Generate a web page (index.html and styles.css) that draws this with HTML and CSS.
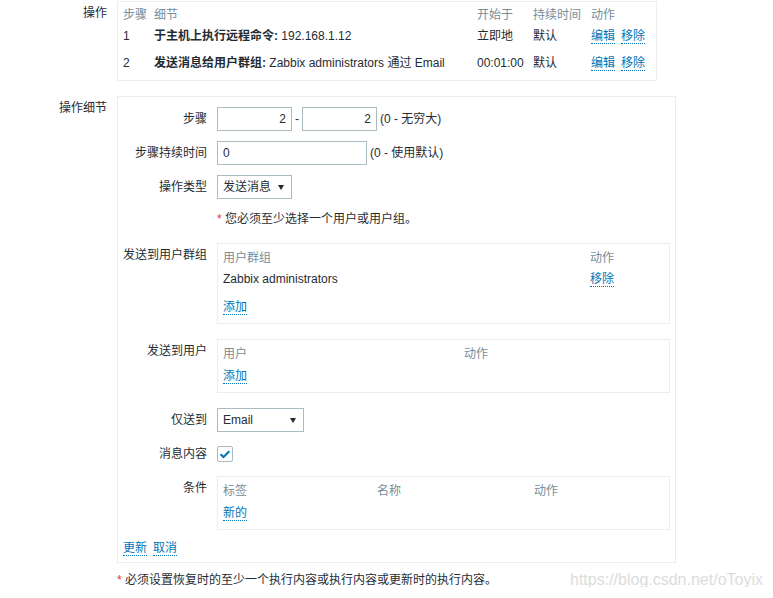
FILE: index.html
```html
<!DOCTYPE html>
<html lang="zh-CN">
<head>
<meta charset="utf-8">
<title>操作</title>
<link rel="stylesheet" href="styles.css">
</head>
<body>
<div class="form-grid">
  <div class="section-label">操作</div>
  <div class="ops-box">
    <table class="ops-table">
      <colgroup><col class="c-step"><col class="c-detail"><col class="c-start"><col class="c-dur"><col></colgroup>
      <thead>
        <tr><th>步骤</th><th>细节</th><th>开始于</th><th>持续时间</th><th>动作</th></tr>
      </thead>
      <tbody>
        <tr>
          <td>1</td>
          <td><b>于主机上执行远程命令:</b> 192.168.1.12</td>
          <td>立即地</td>
          <td>默认</td>
          <td><a class="link" href="#">编辑</a><a class="link" href="#">移除</a></td>
        </tr>
        <tr>
          <td>2</td>
          <td><b>发送消息给用户群组:</b> Zabbix administrators 通过 Email</td>
          <td>00:01:00</td>
          <td>默认</td>
          <td><a class="link" href="#">编辑</a><a class="link" href="#">移除</a></td>
        </tr>
      </tbody>
    </table>
  </div>

  <div class="section-label">操作细节</div>
  <div class="details-box">
    <ul class="form-list">
      <li class="form-row">
        <label class="row-label">步骤</label>
        <div class="field-inline">
          <input class="input input-step" type="text" value="2">
          <span>-</span>
          <input class="input input-step" type="text" value="2">
          <span>(0 - 无穷大)</span>
        </div>
      </li>
      <li class="form-row">
        <label class="row-label">步骤持续时间</label>
        <div class="field-inline">
          <input class="input input-dur" type="text" value="0">
          <span>(0 - 使用默认)</span>
        </div>
      </li>
      <li class="form-row">
        <label class="row-label">操作类型</label>
        <div class="field-inline">
          <div class="select select-type"><span>发送消息</span><span class="arrow"></span></div>
        </div>
      </li>
      <li class="form-row">
        <span class="row-label"></span>
        <div class="note"><span class="asterisk">*</span> 您必须至少选择一个用户或用户组。</div>
      </li>
      <li class="form-row">
        <label class="row-label row-label-top">发送到用户群组</label>
        <div class="subtable">
          <table class="sub">
            <colgroup><col class="c-group"><col></colgroup>
            <tr class="th-row"><td>用户群组</td><td>动作</td></tr>
            <tr class="data-row"><td>Zabbix administrators</td><td><a class="link" href="#">移除</a></td></tr>
            <tr class="add-row"><td colspan="2"><a class="link" href="#">添加</a></td></tr>
          </table>
        </div>
      </li>
      <li class="form-row">
        <label class="row-label row-label-top">发送到用户</label>
        <div class="subtable">
          <table class="sub">
            <colgroup><col class="c-user"><col></colgroup>
            <tr class="th-row"><td>用户</td><td>动作</td></tr>
            <tr class="add-row"><td colspan="2"><a class="link" href="#">添加</a></td></tr>
          </table>
        </div>
      </li>
      <li class="form-row">
        <label class="row-label">仅送到</label>
        <div class="field-inline">
          <div class="select select-media"><span>Email</span><span class="arrow"></span></div>
        </div>
      </li>
      <li class="form-row">
        <label class="row-label">消息内容</label>
        <div class="field-inline">
          <span class="checkbox">
            <svg width="16" height="16" viewBox="0 0 16 16"><path d="M3.5 8.2 L6.5 11 L12.3 5.2" fill="none" stroke="#0275b8" stroke-width="2"/></svg>
          </span>
        </div>
      </li>
      <li class="form-row">
        <label class="row-label row-label-top">条件</label>
        <div class="subtable">
          <table class="sub">
            <colgroup><col class="c-tag"><col class="c-name"><col></colgroup>
            <tr class="th-row"><td>标签</td><td>名称</td><td>动作</td></tr>
            <tr class="add-row"><td colspan="3"><a class="link" href="#">新的</a></td></tr>
          </table>
        </div>
      </li>
    </ul>
    <div class="form-actions"><a class="link" href="#">更新</a><a class="link" href="#">取消</a></div>
  </div>

  <div class="footer">
    <span><span class="asterisk">*</span> 必须设置恢复时的至少一个执行内容或执行内容或更新时的执行内容。</span>
    <span class="watermark">https://blog.csdn.net/oToyix</span>
  </div>
</div>
</body>
</html>
```

FILE: styles.css
```css
html, body {
  background: #fff;
}
body {
  margin: 0;
  padding-top: 1px;
  font-family: "Liberation Sans", Arial, "Noto Sans CJK SC", sans-serif;
  font-size: 12px;
  line-height: 14px;
  color: #1f2c33;
}

.form-grid {
  display: grid;
  grid-template-columns: 107px 1fr;
  column-gap: 10px;
  align-items: start;
}

.section-label {
  text-align: right;
  padding-top: 5px;
  line-height: 14px;
}

/* operations box */
.ops-box {
  width: 540px;
  box-sizing: border-box;
  border: 1px solid #ebeef0;
  padding: 6px 5px 4px;
  margin-bottom: 15px;
}
.ops-table {
  width: 100%;
  table-layout: fixed;
  border-collapse: collapse;
}
.ops-table th {
  padding: 0;
  text-align: left;
  font-weight: normal;
  color: #768d99;
  white-space: nowrap;
}
.ops-table td {
  padding: 7px 0 6px;
  white-space: nowrap;
}
.ops-table b {
  font-weight: bold;
}
.c-step { width: 31px; }
.c-detail { width: 323px; }
.c-start { width: 56px; }
.c-dur { width: 58px; }

.link {
  color: #0275b8;
  text-decoration: none;
  border-bottom: 1px dotted #0275b8;
  margin-right: 6px;
}

/* details box */
.details-box {
  width: 559px;
  box-sizing: border-box;
  border: 1px solid #ebeef0;
  padding: 10px 5px 7px;
}
.form-list {
  list-style: none;
  margin: 0;
  padding: 0;
  display: flex;
  flex-direction: column;
  gap: 10px;
}
.form-row {
  display: flex;
  gap: 10px;
  min-height: 24px;
}
.row-label {
  flex: none;
  width: 84px;
  text-align: right;
  line-height: 24px;
  white-space: nowrap;
}
.row-label-top {
  line-height: 14px;
  padding-top: 5px;
}
.field-inline {
  display: flex;
  align-items: center;
  gap: 3px;
  height: 24px;
  white-space: nowrap;
}
.input {
  height: 24px;
  box-sizing: border-box;
  border: 1px solid #acbbc2;
  border-radius: 0;
  padding: 0 5px;
  margin: 0;
  font: inherit;
  color: #1f2c33;
  background: #fff;
  outline: none;
}
.input-step {
  width: 75px;
  text-align: right;
}
.input-dur {
  width: 150px;
}
.select {
  display: flex;
  align-items: center;
  justify-content: space-between;
  height: 24px;
  box-sizing: border-box;
  border: 1px solid #acbbc2;
  padding: 0 7px 0 5px;
  background: #fff;
}
.select-type { width: 75px; }
.select-media { width: 87px; }
.arrow {
  width: 0;
  height: 0;
  border-left: 3px solid transparent;
  border-right: 3px solid transparent;
  border-top: 5px solid #1f2c33;
}
.note {
  line-height: 18px;
  height: 24px;
  padding-top: 1px;
  box-sizing: border-box;
}
.asterisk {
  color: #e33734;
}
.checkbox {
  display: block;
  width: 16px;
  height: 16px;
  box-sizing: border-box;
  border: 1px solid #acbbc2;
  border-radius: 2px;
}
.checkbox svg {
  display: block;
  margin: -1px;
}

.subtable {
  width: 453px;
  box-sizing: border-box;
  border: 1px solid #ebeef0;
  padding: 0 5px;
  margin-bottom: 5px;
}
.sub {
  width: 100%;
  table-layout: fixed;
  border-collapse: collapse;
}
.sub td {
  padding: 0;
  white-space: nowrap;
}
.th-row td {
  padding-top: 7px;
  color: #768d99;
}
.data-row td {
  padding: 7px 0 6px;
}
.add-row td {
  padding: 8px 0 9px;
}
.c-group { width: 367px; }
.c-user { width: 241px; }
.c-tag { width: 154px; }
.c-name { width: 157px; }

.form-actions {
  margin-top: 6px;
  line-height: 14px;
}

.footer {
  grid-column: 2;
  margin-top: 10px;
  display: flex;
  justify-content: space-between;
  align-items: center;
  padding-right: 10px;
  height: 14px;
  white-space: nowrap;
}
.watermark {
  font-size: 16px;
  line-height: 14px;
  color: #dcdcdc;
}
```
